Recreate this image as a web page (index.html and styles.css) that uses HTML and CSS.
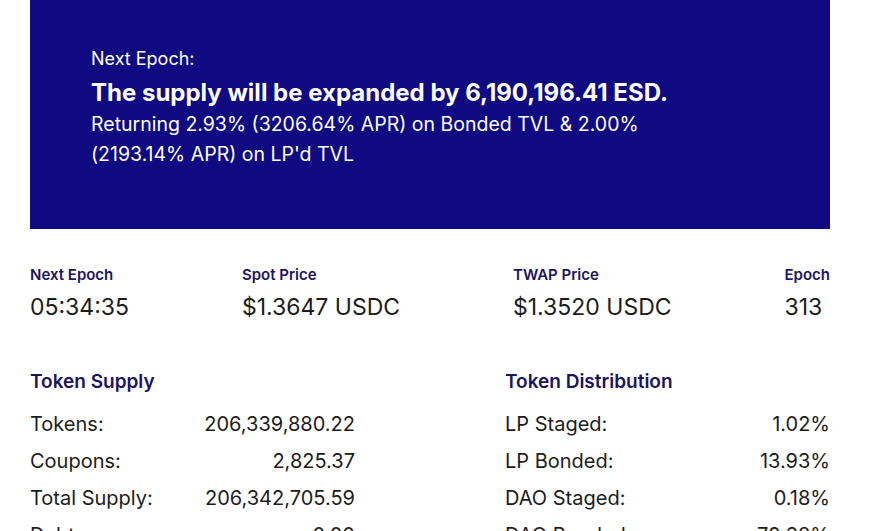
FILE: index.html
```html
<!DOCTYPE html>
<html>

<head>
	<meta charset="utf-8">
	<title>ESD Dashboard</title>
	<link rel="stylesheet" href="styles.css">
</head>

<body>
	<div class="page">
		<div class="banner">
			<div class="banner-label">Next Epoch:</div>
			<div class="banner-title">The supply will be expanded by 6,190,196.41 ESD.</div>
			<div class="banner-text">Returning 2.93% (3206.64% APR) on Bonded TVL &amp; 2.00% (2193.14% APR) on LP'd TVL</div>
		</div>

		<div class="stats">
			<div class="stat">
				<div class="stat-label">Next Epoch</div>
				<div class="stat-value">05:34:35</div>
			</div>
			<div class="stat">
				<div class="stat-label">Spot Price</div>
				<div class="stat-value">$1.3647 USDC</div>
			</div>
			<div class="stat">
				<div class="stat-label">TWAP Price</div>
				<div class="stat-value">$1.3520 USDC</div>
			</div>
			<div class="stat">
				<div class="stat-label">Epoch</div>
				<div class="stat-value">313</div>
			</div>
		</div>

		<div class="tables">
			<div class="table">
				<div class="table-title">Token Supply</div>
				<div class="table-row"><span>Tokens:</span><span>206,339,880.22</span></div>
				<div class="table-row"><span>Coupons:</span><span>2,825.37</span></div>
				<div class="table-row"><span>Total Supply:</span><span>206,342,705.59</span></div>
				<div class="table-row"><span>Debt:</span><span>0.00</span></div>
			</div>
			<div class="table">
				<div class="table-title">Token Distribution</div>
				<div class="table-row"><span>LP Staged:</span><span>1.02%</span></div>
				<div class="table-row"><span>LP Bonded:</span><span>13.93%</span></div>
				<div class="table-row"><span>DAO Staged:</span><span>0.18%</span></div>
				<div class="table-row"><span>DAO Bonded:</span><span>72.38%</span></div>
			</div>
		</div>
	</div>
</body>

</html>
```

FILE: styles.css
```css
body {
  margin: 0;
  background-color: #ffffff;
  font-family: Inter, "Liberation Sans", sans-serif;
  color: #1c1c1c;
}

.page {
  width: 800px;
  margin-left: 30px;
}

.banner {
  background-color: #100a82;
  color: #ffffff;
  height: 229px;
  box-sizing: border-box;
  padding-top: 46px;
  padding-inline: 61px 180px;
}

.banner-label {
  font-size: 18px;
  line-height: 26px;
  margin-bottom: 5px;
}

.banner-title {
  font-size: 24px;
  font-weight: bold;
  line-height: 32px;
  white-space: nowrap;
}

.banner-text {
  font-size: 19.5px;
  line-height: 30px;
}

.stats {
  display: flex;
  justify-content: space-between;
  margin-top: 37px;
}

.stat-label {
  font-size: 15px;
  font-weight: 600;
  color: #1b1460;
  line-height: 18px;
}

.stat-value {
  font-size: 23px;
  line-height: 30px;
  margin-top: 8px;
}

.tables {
  display: flex;
  justify-content: space-between;
  margin-top: 48px;
}

.table {
  width: 325px;
}

.table-title {
  font-size: 19px;
  font-weight: 600;
  color: #1b1460;
  line-height: 24px;
  margin-bottom: 12px;
}

.table-row {
  display: flex;
  justify-content: space-between;
  font-size: 20px;
  line-height: 37px;
}
```
